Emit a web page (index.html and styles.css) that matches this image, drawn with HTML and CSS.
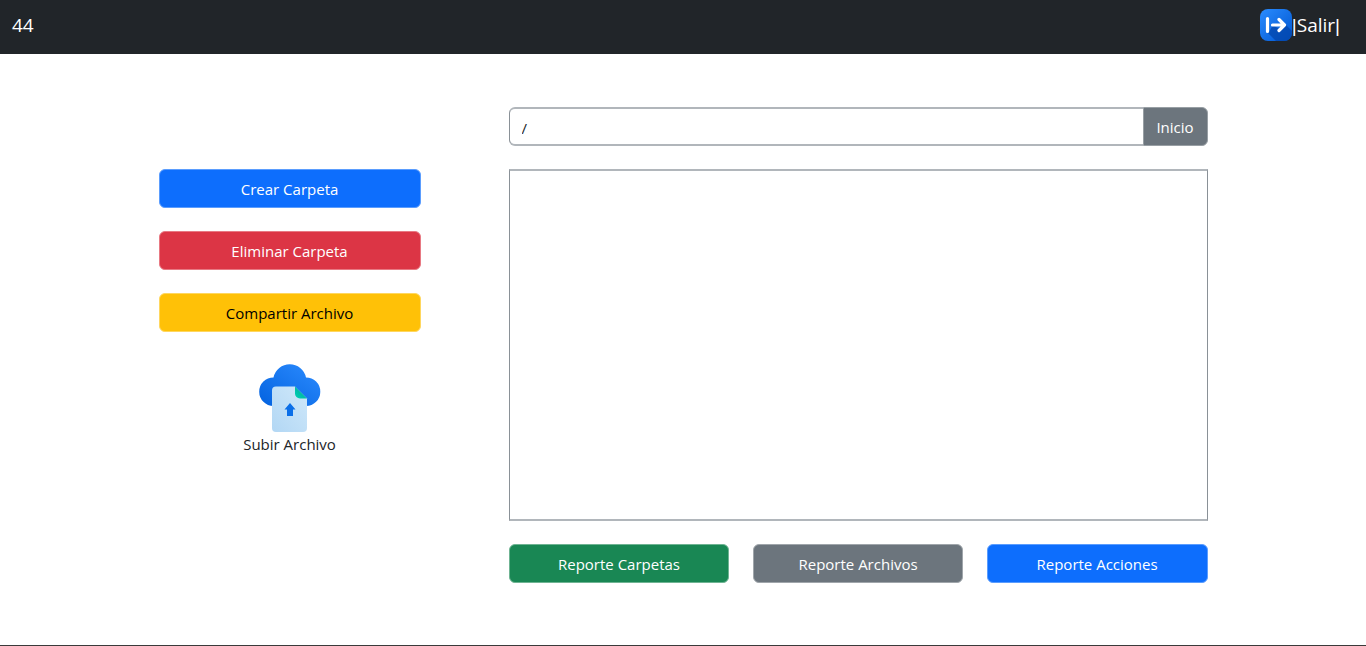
FILE: index.html
```html
<!DOCTYPE html>
<html lang="es">
<head>
<meta charset="utf-8">
<meta name="viewport" content="width=device-width, initial-scale=1">
<title>Archivos</title>
<link rel="stylesheet" href="styles.css">
</head>
<body>
<header class="navbar">
  <span class="brand">44</span>
  <a class="logout" href="#">
    <svg class="logout-icon" viewBox="0 0 32 32" aria-hidden="true">
      <defs>
        <linearGradient id="tile" x1="0" y1="0" x2="1" y2="1">
          <stop offset="0" stop-color="#2a8cff"/>
          <stop offset="1" stop-color="#0055cf"/>
        </linearGradient>
        <clipPath id="tile-clip"><rect width="32" height="32" rx="8"/></clipPath>
      </defs>
      <rect width="32" height="32" rx="8" fill="url(#tile)"/>
      <path d="M7 23 16 32H32V22L25 15 19 20 13 16 9 23Z" fill="#0346ab" opacity=".75" clip-path="url(#tile-clip)"/>
      <path d="M7.500 9.500V22.500M12.500 16H24M19 10.500 24.500 16 19 21.500" fill="none" stroke="#fff" stroke-width="3.200" stroke-linecap="round" stroke-linejoin="round"/>
    </svg>
    <span><span class="bar">|</span>Salir<span class="bar">|</span></span>
  </a>
</header>
<main class="page">
  <div class="layout">
    <aside class="actions">
      <button class="btn primary" type="button">Crear Carpeta</button>
      <button class="btn danger" type="button">Eliminar Carpeta</button>
      <button class="btn warning" type="button">Compartir Archivo</button>
      <button class="upload" type="button">
        <svg class="upload-icon" viewBox="0 0 62 70" aria-hidden="true">
          <defs>
            <linearGradient id="cloud" x1="1" y1="0" x2="0" y2="1">
              <stop offset="0" stop-color="#2c8cff"/>
              <stop offset="1" stop-color="#0362df"/>
            </linearGradient>
            <linearGradient id="sheet" x1="1" y1="0" x2="0" y2="1">
              <stop offset="0" stop-color="#cfe8fa"/>
              <stop offset="1" stop-color="#b2d7f4"/>
            </linearGradient>
            <linearGradient id="fold" x1="0" y1="1" x2="1" y2="0">
              <stop offset="0" stop-color="#00d5b5"/>
              <stop offset="1" stop-color="#009b96"/>
            </linearGradient>
          </defs>
          <path d="M14.500 44A14.300 14.300 0 0 1 14.500 15.400 16.600 16.600 0 0 1 47 15.400 14.300 14.300 0 0 1 47 44Z" fill="url(#cloud)"/>
          <path d="M17 24.500H36L48 36.500V66A4 4 0 0 1 44 70H17A4 4 0 0 1 13 66V28.500A4 4 0 0 1 17 24.500Z" fill="url(#sheet)"/>
          <path d="M36 24.500V31.500A5 5 0 0 0 41 36.500H48Z" fill="url(#fold)"/>
          <path d="M31 41 25.500 47.500H28V54H34V47.500H36.500Z" fill="#0b6fe8"/>
        </svg>
        <span>Subir Archivo</span>
      </button>
    </aside>
    <section class="explorer">
      <form class="path-group">
        <input class="path" type="text" value="/" aria-label="Ruta">
        <button class="home" type="button">Inicio</button>
      </form>
      <div class="files" role="region" aria-label="Archivos"></div>
      <div class="reports">
        <button class="btn success" type="button">Reporte Carpetas</button>
        <button class="btn secondary" type="button">Reporte Archivos</button>
        <button class="btn primary" type="button">Reporte Acciones</button>
      </div>
    </section>
  </div>
</main>
</body>
</html>
```
FILE: styles.css
```css
* { box-sizing: border-box; }

body {
  margin: 0;
  min-height: 100vh;
  display: flex;
  flex-direction: column;
  background: #fff;
  color: #212529;
  font-family: "Segoe UI", "Open Sans", "Noto Sans", sans-serif;
  font-size: 15px;
  line-height: 24px;
}

button, input { font: inherit; }

.navbar {
  display: flex;
  align-items: center;
  justify-content: space-between;
  height: 54px;
  padding: 0 26px 4px 12px;
  background: #212529;
  color: #fff;
  font-size: 19px;
}

.logout {
  display: flex;
  align-items: center;
  color: #fff;
  text-decoration: none;
}

.logout-icon { width: 32px; height: 32px; }

.bar { font-family: "Liberation Sans", sans-serif; }

.page {
  flex: 1;
  padding: 53px 24px;
  border-bottom: 1px solid #3a3a3a;
}

.layout {
  display: grid;
  grid-template-columns: 3fr 8fr;
  gap: 88px;
  max-width: 1049px;
  margin: 0 auto;
}

.actions {
  display: flex;
  flex-direction: column;
  gap: 23px;
  padding-top: 62px;
}

.btn {
  height: 39px;
  padding: 0 12px;
  border: 1px solid;
  border-radius: 6px;
  color: #fff;
  cursor: pointer;
}

.primary { background: #0d6efd; border-color: #5b9dfe; }
.danger { background: #dc3545; border-color: #e87983; }
.warning { background: #ffc107; border-color: #ffd75f; color: #000; }
.success { background: #198754; border-color: #6fb493; }
.secondary { background: #6c757d; border-color: #a0a6ab; }

.upload {
  display: flex;
  flex-direction: column;
  align-items: center;
  align-self: center;
  padding: 7px 0 0;
  border: 0;
  background: none;
  color: #212529;
  cursor: pointer;
}

.upload-icon { width: 62px; height: 70px; }

.explorer {
  display: flex;
  flex-direction: column;
  gap: 23px;
}

.path-group { display: flex; height: 39px; }

.path {
  flex: 1;
  min-width: 0;
  padding: 2px 12px 0;
  border: 2px solid #b1b6bb;
  border-left: 1px solid #8a9197;
  border-right: 0;
  border-radius: 6px 0 0 6px;
  background: #fff;
  color: #212529;
}

.home {
  padding: 0 12px;
  width: 65px;
  border: 1px solid #989fa4;
  border-radius: 0 6px 6px 0;
  background: #6c757d;
  color: #fff;
}

.files {
  height: 352px;
  border: 2px solid #b1b6bb;
  border-left: 1px solid #8a9197;
  border-right: 1px solid #8a9197;
}

.reports {
  display: grid;
  grid-template-columns: 19fr 18fr 19fr;
  gap: 24px;
}
```
